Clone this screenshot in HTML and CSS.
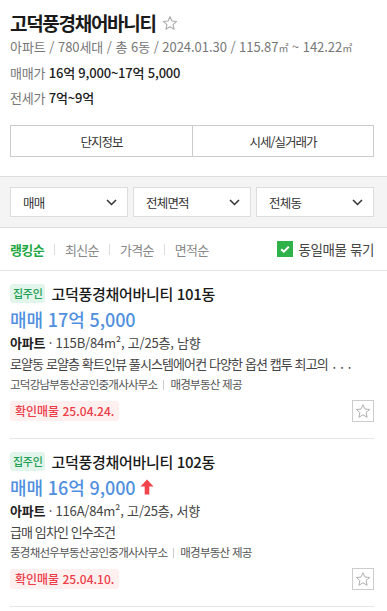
FILE: index.html
```html
<!DOCTYPE html>
<html lang="ko">
<head>
<meta charset="utf-8">
<link rel="stylesheet" href="styles.css">
</head>
<body>
<div class="header">
  <h1 class="title">고덕풍경채어바니티
    <svg class="title-star" width="16" height="16" viewBox="0 0 24 24"><path d="M12 2.5l2.9 6.6 7.1.6-5.4 4.7 1.6 7-6.2-3.7-6.2 3.7 1.6-7L2 9.7l7.1-.6z" fill="none" stroke="#aaa" stroke-width="1.6" stroke-linejoin="round"/></svg>
  </h1>
  <div class="meta">아파트 / 780세대 / 총 6동 / 2024.01.30 / 115.87<span class="unit">㎡</span> ~ 142.22<span class="unit">㎡</span></div>
  <div class="price-line"><span class="plabel">매매가</span> <span class="pval">16억 9,000~17억 5,000</span></div>
  <div class="price-line"><span class="plabel">전세가</span> <span class="pval">7억~9억</span></div>
  <div class="tabs">
    <div class="tab">단지정보</div>
    <div class="tab">시세/실거래가</div>
  </div>
</div>

<div class="filters">
  <div class="select"><span>매매</span><svg width="11" height="7" viewBox="0 0 11 7"><path d="M1 1l4.5 4.5L10 1" fill="none" stroke="#333" stroke-width="1.5"/></svg></div>
  <div class="select"><span>전체면적</span><svg width="11" height="7" viewBox="0 0 11 7"><path d="M1 1l4.5 4.5L10 1" fill="none" stroke="#333" stroke-width="1.5"/></svg></div>
  <div class="select"><span>전체동</span><svg width="11" height="7" viewBox="0 0 11 7"><path d="M1 1l4.5 4.5L10 1" fill="none" stroke="#333" stroke-width="1.5"/></svg></div>
</div>

<div class="sortbar">
  <div class="sorts">
    <span class="sort active">랭킹순</span><span class="sep"></span>
    <span class="sort">최신순</span><span class="sep"></span>
    <span class="sort">가격순</span><span class="sep"></span>
    <span class="sort">면적순</span>
  </div>
  <label class="group">
    <span class="check"><svg width="16" height="16" viewBox="0 0 16 16"><path d="M4.2 8.2l2.6 2.5 5-5" fill="none" stroke="#fff" stroke-width="2"/></svg></span>
    동일매물 묶기
  </label>
</div>

<div class="list">
  <div class="item">
    <div class="item-head"><span class="owner">집주인</span><span class="name">고덕풍경채어바니티 101동</span></div>
    <div class="price">매매 17억 5,000</div>
    <div class="spec"><b>아파트</b> · 115B/84m², 고/25층, 남향</div>
    <div class="desc">로얄동 로얄층 확트인뷰 풀시스템에어컨 다양한 옵션 캡투 최고의 <span class="dots">...</span></div>
    <div class="agent">고덕강남부동산공인중개사사무소<span class="bar"></span>매경부동산 제공</div>
    <div class="item-foot">
      <span class="confirm">확인매물 25.04.24.</span>
      <span class="fav"><svg width="16" height="16" viewBox="0 0 24 24"><path d="M12 2.5l2.9 6.6 7.1.6-5.4 4.7 1.6 7-6.2-3.7-6.2 3.7 1.6-7L2 9.7l7.1-.6z" fill="none" stroke="#aaa" stroke-width="1.4" stroke-linejoin="round"/></svg></span>
    </div>
  </div>
  <div class="item">
    <div class="item-head"><span class="owner">집주인</span><span class="name">고덕풍경채어바니티 102동</span></div>
    <div class="price">매매 16억 9,000<svg class="up" width="14" height="16" viewBox="0 0 14 16"><path d="M7 0.5L13.5 7.5H9.3V15.5H4.7V7.5H0.5z" fill="#f0434b"/></svg></div>
    <div class="spec"><b>아파트</b> · 116A/84m², 고/25층, 서향</div>
    <div class="desc">급매 임차인 인수조건</div>
    <div class="agent">풍경채선우부동산공인중개사사무소<span class="bar"></span>매경부동산 제공</div>
    <div class="item-foot">
      <span class="confirm">확인매물 25.04.10.</span>
      <span class="fav"><svg width="16" height="16" viewBox="0 0 24 24"><path d="M12 2.5l2.9 6.6 7.1.6-5.4 4.7 1.6 7-6.2-3.7-6.2 3.7 1.6-7L2 9.7l7.1-.6z" fill="none" stroke="#aaa" stroke-width="1.4" stroke-linejoin="round"/></svg></span>
    </div>
  </div>
</div>
</body>
</html>
```

FILE: styles.css
```css
* { box-sizing: border-box; }
html, body { margin: 0; padding: 0; background: #fff; }
body {
  font-family: "Noto Sans CJK KR", "Noto Sans", "Liberation Sans", sans-serif;
  color: #222;
  font-size: 13px;
  overflow: hidden;
}
.header { padding: 10px 13px 19px 10px; }
.title {
  margin: 0;
  font-size: 19px;
  font-weight: 700;
  line-height: 26px;
  color: #1a1a1a;
  display: flex;
  align-items: center;
  gap: 6px;
  letter-spacing: -1.3px;
}
.title-star { margin-top: -1px; }
.meta {
  margin-top: 1px;
  color: #777;
  font-size: 13px;
  line-height: 20px;
  letter-spacing: -0.05px;
}
.unit { font-size: 10px; }
.price-line {
  margin-top: 5px;
  line-height: 20px;
  font-size: 13px;
  letter-spacing: -0.2px;
}
.plabel { color: #777; }
.pval { color: #222; font-weight: 500; }
.tabs {
  margin-top: 17px;
  display: grid;
  grid-template-columns: 1fr 1fr;
  border: 1px solid #ccc;
  height: 32px;
}
.tab {
  display: flex;
  align-items: center;
  justify-content: center;
  font-size: 12.5px;
  color: #333;
  letter-spacing: -1px;
}
.tab + .tab { border-left: 1px solid #ccc; }

.filters {
  background: #f4f4f4;
  border-top: 1px solid #ddd;
  border-bottom: 1px solid #ddd;
  padding: 10px 13px 10px 10px;
  display: grid;
  grid-template-columns: 1fr 1fr 1fr;
  gap: 5px;
}
.select {
  background: #fff;
  border: 1px solid #ddd;
  height: 30px;
  display: flex;
  align-items: center;
  justify-content: space-between;
  padding: 0 10px 0 12px;
  font-size: 12.5px;
  letter-spacing: -0.8px;
  color: #333;
}

.sortbar {
  height: 43px;
  border-bottom: 1px solid #e5e5e5;
  padding: 0 13px 0 10px;
  display: flex;
  align-items: center;
  justify-content: space-between;
}
.sorts { display: flex; align-items: center; }
.sort { font-size: 13px; color: #888; letter-spacing: -0.7px; }
.sort.active { color: #21a741; font-weight: 700; letter-spacing: -0.6px; }
.sep {
  width: 1px;
  height: 11px;
  background: #ddd;
  margin: 0 10px;
}
.group {
  display: flex;
  align-items: center;
  gap: 6px;
  font-size: 13.5px;
  color: #444;
  letter-spacing: -0.4px;
}
.check {
  width: 16px;
  height: 16px;
  background: #2fb24a;
  display: block;
}
.check svg { display: block; }

.list { padding: 0 13px 0 10px; }
.item {
  padding: 13px 0 16px;
  border-bottom: 1px solid #e5e5e5;
}
.item-head {
  display: flex;
  align-items: center;
  gap: 6px;
  height: 19px;
}
.owner {
  background: #e2f5ea;
  color: #1f9e55;
  font-size: 11px;
  font-weight: 500;
  padding: 0 3px;
  height: 19px;
  line-height: 19px;
  border-radius: 3px;
  letter-spacing: -0.3px;
}
.name {
  font-size: 15px;
  font-weight: 500;
  color: #1a1a1a;
  letter-spacing: -0.3px;
}
.price {
  margin-top: 4px;
  height: 24px;
  line-height: 24px;
  font-size: 18px;
  font-weight: 500;
  color: #5190e0;
  display: flex;
  align-items: center;
  gap: 4px;
  letter-spacing: -0.1px;
}
.spec {
  margin-top: 1px;
  line-height: 21px;
  font-size: 13px;
  color: #444;
  letter-spacing: -0.2px;
}
.spec b { color: #222; font-weight: 700; }
.desc {
  line-height: 21px;
  font-size: 13px;
  color: #444;
  white-space: nowrap;
  letter-spacing: -0.9px;
}
.dots { letter-spacing: 4px; margin-left: 2px; }
.agent {
  line-height: 21px;
  font-size: 11.5px;
  color: #555;
  display: flex;
  align-items: center;
  letter-spacing: -0.75px;
}
.bar {
  width: 1px;
  height: 10px;
  background: #ccc;
  margin: 0 6px;
}
.item-foot {
  margin-top: 5px;
  display: flex;
  align-items: center;
  justify-content: space-between;
  height: 22px;
}
.confirm {
  background: #fff0f0;
  color: #ec3d48;
  font-size: 12px;
  font-weight: 500;
  padding: 0 5px;
  height: 20px;
  line-height: 20px;
  border-radius: 3px;
}
.fav {
  width: 22px;
  height: 22px;
  border: 1px solid #ccc;
  display: flex;
  align-items: center;
  justify-content: center;
}
```
